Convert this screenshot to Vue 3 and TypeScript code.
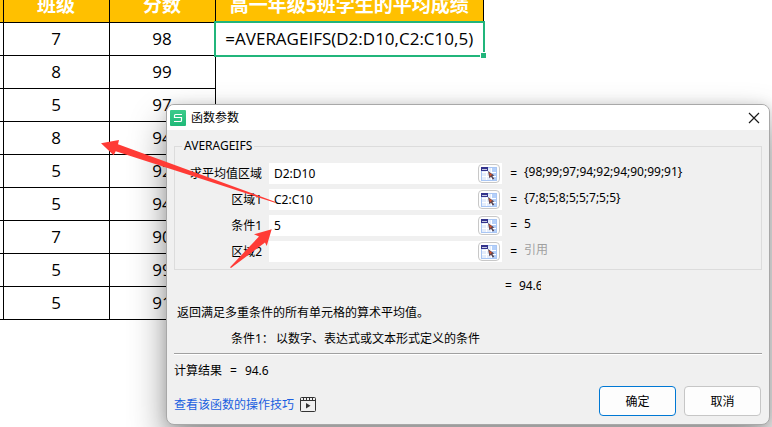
<script setup lang="ts">
import { ref } from 'vue'

interface ScoreRow {
  classNo: number
  score: number
}

interface Argument {
  id: string
  label: string
  value: string
  preview: string
  empty?: boolean
}

const rows: ScoreRow[] = [
  { classNo: 7, score: 98 },
  { classNo: 8, score: 99 },
  { classNo: 5, score: 97 },
  { classNo: 8, score: 94 },
  { classNo: 5, score: 92 },
  { classNo: 5, score: 94 },
  { classNo: 7, score: 90 },
  { classNo: 5, score: 99 },
  { classNo: 5, score: 91 },
]

const args = ref<Argument[]>([
  { id: 'average-range', label: '求平均值区域', value: 'D2:D10', preview: '{98;99;97;94;92;94;90;99;91}' },
  { id: 'range-1', label: '区域1', value: 'C2:C10', preview: '{7;8;5;8;5;5;7;5;5}' },
  { id: 'criteria-1', label: '条件1', value: '5', preview: '5' },
  { id: 'range-2', label: '区域2', value: '', preview: '引用', empty: true },
])
</script>

<template>
  <main class="desktop">
    <table class="sheet">
      <thead>
        <tr>
          <th class="stub"></th>
          <th class="col">班级</th>
          <th class="col">分数</th>
          <th class="wide">高一年级5班学生的平均成绩</th>
        </tr>
      </thead>
      <tbody>
        <tr v-for="(row, i) in rows" :key="i">
          <td></td>
          <td>{{ row.classNo }}</td>
          <td>{{ row.score }}</td>
          <td v-if="i === 0" class="active">
            =AVERAGEIFS(D2:D10,C2:C10,5)
            <span class="selection"><span class="handle"></span></span>
          </td>
          <td v-else class="blank"></td>
        </tr>
      </tbody>
    </table>

    <section class="dialog" role="dialog" aria-labelledby="dialog-title">
      <header class="titlebar">
        <svg class="logo" viewBox="0 0 16 16" aria-hidden="true">
          <defs>
            <linearGradient id="logo-fill" x1="0" y1="0" x2="0" y2="1">
              <stop offset="0" stop-color="#3ccb8b" />
              <stop offset="1" stop-color="#1fb978" />
            </linearGradient>
          </defs>
          <rect width="16" height="16" rx="1" fill="url(#logo-fill)" />
          <path d="M12 4.5H5.5Q4.5 4.5 4.5 5.5V7.5H11.5V10.5Q11.5 11.5 10.5 11.5H4" fill="none" stroke="#fff" stroke-width="1.2" />
        </svg>
        <h1 id="dialog-title">函数参数</h1>
        <button type="button" class="close" aria-label="关闭">
          <svg viewBox="0 0 12 12"><path d="M1 1L11 11M11 1L1 11" stroke="#1a1a1a" stroke-width="1.2" /></svg>
        </button>
      </header>

      <form class="body" @submit.prevent>
        <fieldset class="group">
          <legend>AVERAGEIFS</legend>
          <div v-for="arg in args" :key="arg.id" class="argument">
            <label :for="arg.id">{{ arg.label }}</label>
            <div class="field">
              <input :id="arg.id" v-model="arg.value" type="text" autocomplete="off" spellcheck="false" />
              <button type="button" class="picker" aria-label="选择区域">
                <svg viewBox="0 0 16 14">
                  <rect x="0.5" y="0.5" width="15" height="13" fill="#e4edfc" stroke="#a9c6f4" />
                  <path d="M10 1H15V13H11Z" fill="#b4d0fa" />
                  <path d="M1 9.5H15M1 5.5H15M5.5 4V13M10.5 1V13" stroke="#fff" />
                  <rect width="7" height="4" fill="#32328c" />
                  <rect x="1" y="2" width="5" height="1" fill="#c3c8e0" />
                  <path d="M7 4L13.4 8.4L11.4 8.9L13.2 11.8L11.8 12.6L10 9.8L8.4 11.2Z" fill="#5a4450" />
                  <path d="M8 5.4L11 7.6L9 9.4Z" fill="#d9532c" />
                </svg>
              </button>
            </div>
            <span class="equals">=</span>
            <output :for="arg.id" :class="{ empty: arg.empty }">{{ arg.preview }}</output>
          </div>
        </fieldset>

        <p class="interim"><span>=</span><output>94.6</output></p>
        <p class="summary">返回满足多重条件的所有单元格的算术平均值。</p>
        <p class="hint"><span>条件1：</span><span>以数字、表达式或文本形式定义的条件</span></p>
        <hr />
        <p class="result"><span>计算结果</span><span>=</span><output>94.6</output></p>

        <footer class="footer">
          <a class="help" href="#">
            查看该函数的操作技巧
            <svg viewBox="0 0 16 15" aria-hidden="true">
              <rect x="0.5" y="0.5" width="15" height="14" rx="1" fill="none" stroke="#333" />
              <path d="M0.5 3.5H15.5M3.5 1V3M6.5 1V3M9.5 1V3M12.5 1V3" stroke="#333" />
              <path d="M6 6L10.5 8.7L6 11.4Z" fill="#333" />
            </svg>
          </a>
          <div class="actions">
            <button type="submit" class="primary">确定</button>
            <button type="button">取消</button>
          </div>
        </footer>
      </form>
    </section>

    <svg class="arrows" width="300" height="290" viewBox="0 0 300 290" aria-hidden="true">
      <path d="M101 143.3L119 140L118 144.3L275 201.7V202.7L115.7 151.3L113.7 155.3Z" />
      <path d="M271.7 229.3L254 234.3L259 236.5L230 267.2L231 268L265 242.5L266.7 246Z" />
    </svg>
  </main>
</template>

<style>
body {
  margin: 0;
  background: #fff;
}
</style>

<style scoped>
.desktop {
  position: relative;
  min-height: 100vh;
  overflow: hidden;
  color: #000;
  font-family: "Noto Sans", "Noto Sans CJK SC", sans-serif;
  font-size: 12px;
}

.sheet {
  margin: -11px 0 0;
  border-collapse: collapse;
  table-layout: fixed;
  width: 484px;
  font-family: "Open Sans", "Noto Sans CJK SC", sans-serif;
  font-size: 17px;
}

.sheet th,
.sheet td {
  box-sizing: border-box;
  height: 33px;
  padding: 0;
  border: 1px solid #000;
  line-height: 24px;
  text-align: center;
}

.sheet th:first-child,
.sheet td:first-child {
  border-left: none;
}

.sheet th {
  padding-bottom: 2px;
  background: #ffc000;
  color: #fff;
  font-size: 19px;
}

.stub {
  width: 3px;
}

.col {
  width: 106px;
}

.sheet .active {
  position: relative;
  white-space: nowrap;
}

.sheet .blank {
  border: none;
}

.selection {
  position: absolute;
  inset: -2px;
  border: 2px solid #21b57b;
}

.handle {
  position: absolute;
  right: -3px;
  bottom: -3px;
  width: 5px;
  height: 5px;
  border: solid #fff;
  border-width: 1px 0 0 1px;
  background: #21b57b;
}

.dialog {
  position: absolute;
  top: 104px;
  right: 2px;
  left: 166px;
  border: 1px solid #a8a8a8;
  border-radius: 8px;
  overflow: hidden;
  background: #f0f0f0;
  box-shadow: 0 18px 36px rgba(0, 0, 0, 0.42), 0 0 12px rgba(0, 0, 0, 0.12);
}

.titlebar {
  display: flex;
  align-items: center;
  gap: 5px;
  height: 25px;
  padding: 0 9px 0 3px;
  background: #fff;
}

.titlebar h1 {
  flex: 1;
  margin: 0;
  font-size: 12px;
  font-weight: 400;
  line-height: 16px;
}

.logo {
  width: 16px;
  height: 16px;
}

.close {
  display: flex;
  padding: 0;
  border: none;
  background: none;
}

.close svg {
  width: 12px;
  height: 12px;
}

.body {
  padding: 8px 7px 8px;
}

.group {
  display: flex;
  flex-direction: column;
  gap: 5px;
  margin: 0;
  padding: 9px 0 7px;
  border: 1px solid #dcdcdc;
}

.group legend {
  margin-left: 7px;
  padding: 0 2px;
  line-height: 16px;
}

.argument {
  display: grid;
  grid-template-columns: 87px 233px 8px 1fr;
  column-gap: 7px;
  height: 21px;
}

.argument label {
  line-height: 21px;
  text-align: right;
}

.field {
  display: flex;
  align-items: center;
  padding-right: 2px;
  background: #fff;
}

.field input {
  flex: 1;
  min-width: 0;
  height: 21px;
  box-sizing: border-box;
  padding: 0 5px;
  border: none;
  outline: none;
  background: none;
  color: inherit;
  font: inherit;
}

.picker {
  display: flex;
  align-items: center;
  justify-content: center;
  box-sizing: border-box;
  width: 22px;
  height: 19px;
  padding: 0;
  border: 1px solid #c8c8c8;
  border-radius: 4px;
  background: #fdfdfd;
}

.picker svg {
  width: 16px;
  height: 14px;
}

.equals {
  line-height: 21px;
  text-align: right;
}

.argument output {
  line-height: 17px;
}

.argument .empty {
  color: #a0a0a0;
}

.body p {
  display: flex;
  margin: 0;
  line-height: 16px;
}

.body .interim {
  gap: 7px;
  margin: 8px 0 0 331px;
}

.interim output {
  width: 22px;
  overflow: hidden;
}

.body .summary {
  margin: 11px 0 0 3px;
}

.body .hint {
  gap: 2px;
  margin: 10px 0 0 57px;
}

.body hr {
  height: 1px;
  margin: 6px 0 0;
  border: none;
  border-top: 1px solid #a0a0a0;
  background: #fff;
}

.body .result {
  gap: 8px;
  margin-top: 8px;
}

.footer {
  display: flex;
  align-items: center;
  justify-content: space-between;
  margin-top: 7px;
  padding-right: 1px;
}

.help {
  display: flex;
  align-items: center;
  gap: 6px;
  padding-top: 7px;
  color: #1a5fe0;
  line-height: 16px;
  text-decoration: none;
}

.help svg {
  width: 16px;
  height: 15px;
}

.actions {
  display: flex;
  gap: 8px;
}

.actions button {
  box-sizing: border-box;
  width: 77px;
  height: 30px;
  padding: 0;
  border: 1px solid #c6c6c6;
  border-radius: 4px;
  background: #fdfdfd;
  color: #000;
  font: inherit;
}

.actions .primary {
  border-color: #0078d4;
}

.arrows {
  position: absolute;
  top: 0;
  left: 0;
  pointer-events: none;
}

.arrows path {
  fill: #ff3b36;
}
</style>
